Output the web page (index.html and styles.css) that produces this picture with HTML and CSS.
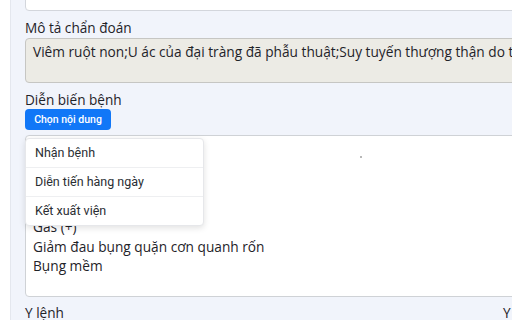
FILE: index.html
```html
<!DOCTYPE html>
<html lang="vi">
<head>
<meta charset="utf-8">
<link rel="stylesheet" href="styles.css">
</head>
<body>
<div class="page">
  <div class="top-input"></div>
  <div class="label first">Mô tả chẩn đoán</div>
  <div class="field diag">Viêm ruột non;U ác của đại tràng đã phẫu thuật;Suy tuyến thượng thận do thuốc</div>
  <div class="label">Diễn biến bệnh</div>
  <div class="section">
    <button class="btn">Chọn nội dung</button>
    <div class="field editor">
      <div>Bệnh tỉnh, tiếp xúc tốt</div>
      <div>Da niêm hồng</div>
      <div>Không sốt</div>
      <div>Ăn uống được</div>
      <div>Gas (+)</div>
      <div>Giảm đau bụng quặn cơn quanh rốn</div>
      <div>Bụng mềm</div>
      <span class="dot"></span>
    </div>
    <ul class="menu">
      <li>Nhận bệnh</li>
      <li>Diễn tiến hàng ngày</li>
      <li>Kết xuất viện</li>
    </ul>
  </div>
  <div class="row">
    <div class="label">Y lệnh</div>
    <div class="label">Y tá thực hiện</div>
  </div>
</div>
</body>
</html>
```
FILE: styles.css
```css
html, body {
  margin: 0;
  padding: 0;
  background: #ffffff;
}
body {
  width: 512px;
  height: 320px;
  overflow: hidden;
  font-family: "Open Sans", "Noto Sans", sans-serif;
  color: #1f2329;
}
.page {
  margin-left: 10px;
  height: 320px;
  background: #f1f4fb;
  border-left: 1px solid #e4e7ee;
  padding-left: 14px;
  overflow: hidden;
}
.top-input {
  width: 540px;
  height: 30px;
  margin-top: -21px;
  background: #ffffff;
  border: 1px solid #d3d6dc;
  border-radius: 4px;
}
.label {
  font-size: 13.6px;
  line-height: 18px;
  margin-top: 8px;
  white-space: nowrap;
}
.label.first {
  margin-top: 8px;
}
.row .label {
  margin-top: 7px;
}
.field {
  width: 540px;
  box-sizing: border-box;
  border: 1px solid #c8cacd;
  border-radius: 4px;
  font-size: 13.7px;
  line-height: 19.5px;
  padding: 3px 7px;
  white-space: nowrap;
}
.diag {
  margin-top: 1px;
  height: 45px;
  background: #ecebe5;
  border-color: #c6c6c3;
}
.section {
  position: relative;
}
.btn {
  display: block;
  margin-top: 0;
  width: 86px;
  height: 21px;
  padding: 0;
  border: none;
  border-radius: 4px;
  background: #1177f7;
  color: #ffffff;
  font-family: Roboto, "Liberation Sans", sans-serif;
  font-size: 10.5px;
  font-weight: 500;
}
.editor {
  position: relative;
  margin-top: 5px;
  height: 162px;
  background: #ffffff;
  border-color: #cfd2d6;
  padding-top: 3px;
}
.dot {
  position: absolute;
  left: 334px;
  top: 20px;
  width: 2px;
  height: 2px;
  background: #b8b8b8;
}
.menu {
  position: absolute;
  left: 0;
  top: 29px;
  width: 177px;
  margin: 0;
  padding: 0;
  list-style: none;
  background: #ffffff;
  border: 1px solid #e6e7ea;
  border-radius: 4px;
  box-shadow: 0 2px 6px rgba(0, 0, 0, 0.12);
  font-family: Roboto, "Liberation Sans", sans-serif;
  font-size: 12.5px;
  color: #2a2e33;
}
.menu li {
  height: 28px;
  line-height: 28px;
  padding-left: 9px;
  border-top: 1px solid #eeeff1;
}
.menu li:first-child {
  border-top: none;
}
.row {
  display: grid;
  grid-template-columns: 478px 1fr;
}
```
